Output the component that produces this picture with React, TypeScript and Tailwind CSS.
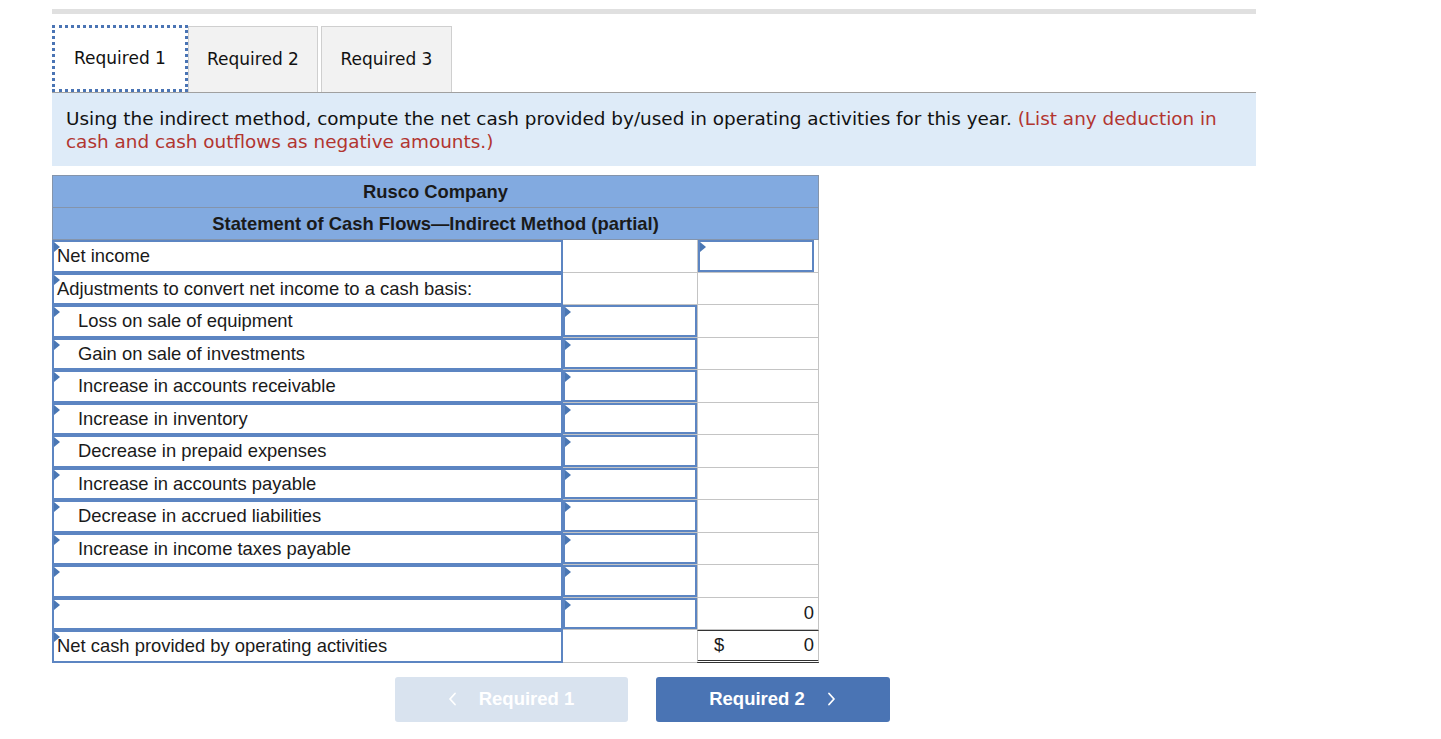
import React from "react";

type Row = {
  label: string;
  indent?: boolean;
  col2Input?: boolean;
  col3Input?: boolean;
  col3Value?: string;
  total?: boolean;
};

const rows: Row[] = [
  { label: "Net income", col3Input: true },
  { label: "Adjustments to convert net income to a cash basis:" },
  { label: "Loss on sale of equipment", indent: true, col2Input: true },
  { label: "Gain on sale of investments", indent: true, col2Input: true },
  { label: "Increase in accounts receivable", indent: true, col2Input: true },
  { label: "Increase in inventory", indent: true, col2Input: true },
  { label: "Decrease in prepaid expenses", indent: true, col2Input: true },
  { label: "Increase in accounts payable", indent: true, col2Input: true },
  { label: "Decrease in accrued liabilities", indent: true, col2Input: true },
  { label: "Increase in income taxes payable", indent: true, col2Input: true },
  { label: "", col2Input: true },
  { label: "", col2Input: true, col3Value: "0" },
  { label: "Net cash provided by operating activities", total: true, col3Value: "0" },
];

function Marker() {
  return (
    <span className="absolute left-0 top-0 w-0 h-0 border-t-[5px] border-b-[5px] border-l-[6px] border-t-transparent border-b-transparent border-l-[#4a77b4]" />
  );
}

function InputBox({ children, className = "" }: { children?: React.ReactNode; className?: string }) {
  return (
    <div className={"relative h-full w-full border-2 border-[#5c85c2] bg-white flex items-center " + className}>
      <Marker />
      {children}
    </div>
  );
}

function Chevron({ dir }: { dir: "left" | "right" }) {
  return (
    <svg width="9" height="14" viewBox="0 0 9 14" fill="none" stroke="currentColor" strokeWidth="1.8" strokeLinecap="round" strokeLinejoin="round">
      {dir === "left" ? <polyline points="7,1.5 2,7 7,12.5" /> : <polyline points="2,1.5 7,7 2,12.5" />}
    </svg>
  );
}

export default function App() {
  return (
    <div className="w-[1441px] h-[739px] bg-white relative" style={{ fontFamily: '"DejaVu Sans", Verdana, sans-serif' }}>
      <div className="pt-[9px] pl-[52px] w-[1256px]">
        <div className="h-[5px] bg-[#e0e0e0] w-[1204px]" />
        {/* tabs */}
        <div className="flex mt-[11px] h-[67px] items-end">
          <div className="h-[67px] w-[136px] bg-white border-[3px] border-dotted border-[#4a74b4] flex items-center justify-center text-[17px] text-[#111]">
            Required 1
          </div>
          <div className="h-[66px] w-[130px] bg-[#f2f2f2] border border-[#cfcfcf] border-b-0 flex items-center justify-center text-[17px] text-[#111] ml-0">
            Required 2
          </div>
          <div className="h-[66px] w-[131px] bg-[#f2f2f2] border border-[#cfcfcf] border-b-0 flex items-center justify-center text-[17px] text-[#111] ml-[3px]">
            Required 3
          </div>
        </div>
        {/* instructions */}
        <div className="w-[1204px] h-[74px] bg-[#deebf8] border-t border-[#a0a0a0] pl-[14px] pr-[20px] pt-[14px] text-[18.4px] leading-[23px] text-[#111]">
          Using the indirect method, compute the net cash provided by/used in operating activities for this year.{" "}
          <span className="text-[#b23530]">(List any deduction in cash and cash outflows as negative amounts.)</span>
        </div>
        {/* table */}
        <div className="mt-[9px] w-[767px]" style={{ fontFamily: '"Liberation Sans", Arial, sans-serif' }}>
          <div className="bg-[#82aae0] border border-[#8494ab] text-[#1a1a1a] font-bold text-[18.4px]">
            <div className="h-[32px] flex items-center justify-center border-b border-[#8494ab]">Rusco Company</div>
            <div className="h-[31px] flex items-center justify-center">Statement of Cash Flows—Indirect Method (partial)</div>
          </div>
          <div className="flex flex-col">
            {rows.map((r, i) => (
              <div key={i} className="flex h-[32.5px] text-[18.4px] text-[#1a1a1a]">
                <div className="w-[511px] h-full">
                  <InputBox className={r.indent ? "pl-[24px]" : "pl-[3px]"}>
                    <span className="whitespace-nowrap">{r.label}</span>
                  </InputBox>
                </div>
                <div className="w-[134px] h-full border-b border-[#c4c4c4]">
                  {r.col2Input ? <InputBox /> : null}
                </div>
                <div
                  className={
                    "w-[122px] h-full border-x border-[#c4c4c4] flex items-center justify-between pr-[4px] " +
                    (r.total ? "border-t border-t-[#333] border-b-[3px] border-b-[#333] border-double " : "border-b ")
                  }
                >
                  {r.col3Input ? (
                    <InputBox />
                  ) : (
                    <>
                      <span className="pl-[16px]">{r.total ? "$" : ""}</span>
                      <span>{r.col3Value ?? ""}</span>
                    </>
                  )}
                </div>
              </div>
            ))}
          </div>
        </div>
        {/* buttons */}
        <div className="flex justify-center w-[1204px] gap-[28px] mt-[14px] pr-[24px]" style={{ fontFamily: '"Liberation Sans", Arial, sans-serif' }}>
          <button className="w-[233px] h-[45px] rounded-[3px] bg-[#d9e3ef] text-white font-bold text-[18.5px] flex items-center justify-center gap-[22px]">
            <Chevron dir="left" />
            <span>Required 1</span>
          </button>
          <button className="w-[234px] h-[45px] rounded-[3px] bg-[#4a74b4] text-white font-bold text-[18.5px] flex items-center justify-center gap-[22px]">
            <span>Required 2</span>
            <Chevron dir="right" />
          </button>
        </div>
      </div>
    </div>
  );
}
